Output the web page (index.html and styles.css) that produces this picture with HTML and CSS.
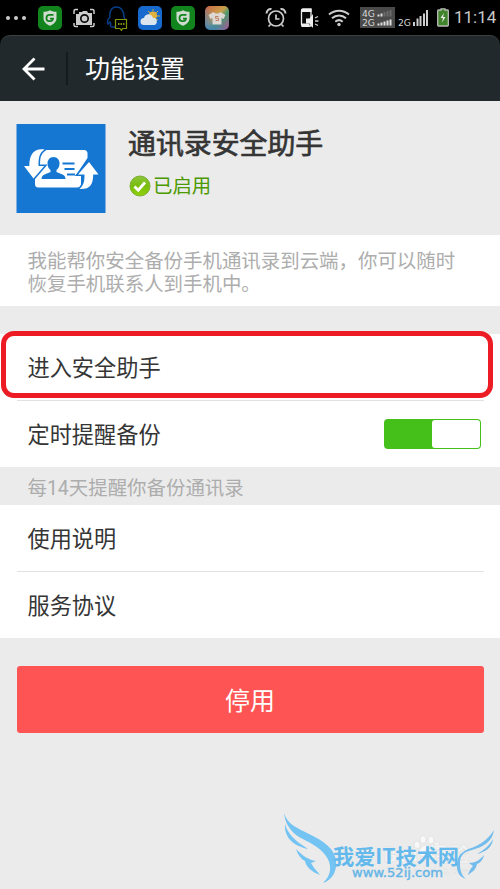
FILE: index.html
```
<!DOCTYPE html>
<html lang="zh-CN">
<head>
<meta charset="utf-8">
<title>功能设置</title>
<link rel="stylesheet" href="styles.css">
</head>
<body>
<div class="screen">
  <div class="status">
    <div class="status-left">
      <svg class="dots" width="22" height="24" viewBox="0 0 22 24"><g fill="#ccc"><circle cx="3" cy="12" r="2"/><circle cx="11" cy="12" r="2"/><circle cx="19" cy="12" r="2"/></g></svg>
      <svg class="shield" width="24" height="24" viewBox="0 0 24 24"><rect width="24" height="24" rx="5" fill="#12841e"/><path d="M12 4.200c2 1.300 4.200 1.600 6.500 1.600v6.500c0 3.500-3 6-6.500 7.500-3.500-1.500-6.500-4-6.500-7.500V5.800c2.300 0 4.500-.3 6.500-1.600z" fill="#d0dcd0"/><path d="M15.500 8.800h-4a3 3 0 0 0-3 3v.8a2.500 2.500 0 0 0 2.500 2.500h1.500a2.500 2.500 0 0 0 2.500-2.500h-3" fill="none" stroke="#12841e" stroke-width="1.800"/></svg>
      <svg class="camera" width="22" height="24" viewBox="0 0 22 24"><path d="M1 8V5q0-1.500 1.500-1.500H5M17 3.500h2.500Q21 3.500 21 5v3M1 17v2q0 1.500 1.500 1.500H5M17 20.500h2.500q1.500 0 1.500-1.500v-2" fill="none" stroke="#ccc" stroke-width="1.500"/><path d="M3 8h3V6h3l1-1h4l1 2h4v12H3z" fill="#ccc"/><circle cx="11.500" cy="12.500" r="3.700" fill="#ccc" stroke="#080808" stroke-width="1.700"/></svg>
      <svg class="qq" width="22" height="26" viewBox="0 0 22 26"><path d="M9 22H6c-2 0-2-2-1-3l-1-2-2 2c-1-2 0-5 2-7C3 6 6 2 10.500 2S18 6 18 12l1 2" fill="none" stroke="#063f8b" stroke-width="1.400"/><path d="M9.500 14.500h11v9h-4l-1 2-1.500-2H9.500z" fill="#000" stroke="#83950b" stroke-width="1.200"/><path d="M12 19h1.500m1 0H16m1 0h1.500" stroke="#a7bd12" stroke-width="1.500"/></svg>
      <svg class="weather" width="24" height="24" viewBox="0 0 24 24"><rect width="24" height="24" rx="5" fill="#1769cd"/><g stroke="#d4a82d" stroke-width="1"><path d="M15 3v2M20 5l-2 2M22 10h-3M10 5l2 2M20 14l-2-1"/></g><circle cx="15" cy="9.500" r="4" fill="#e4b33e"/><path d="M6 19a3.500 3.500 0 0 1 0-7c1-5 8-5 9 0 5-1 5 7 1 7z" fill="#dce5ed"/></svg>
      <svg class="shield2" width="24" height="24" viewBox="0 0 24 24"><rect width="24" height="24" rx="5" fill="#12841e"/><path d="M12 4.200c2 1.300 4.200 1.600 6.500 1.600v6.500c0 3.500-3 6-6.500 7.500-3.500-1.500-6.500-4-6.500-7.500V5.800c2.300 0 4.500-.3 6.500-1.600z" fill="#d0dcd0"/><path d="M15.500 8.800h-4a3 3 0 0 0-3 3v.8a2.500 2.500 0 0 0 2.500 2.500h1.500a2.500 2.500 0 0 0 2.500-2.500h-3" fill="none" stroke="#12841e" stroke-width="1.800"/></svg>
      <div class="shirt"><svg width="24" height="24" viewBox="0 0 24 24"><path d="M8.500 6c2 2 5 2 7 0l5 3-2 4-2-1v6.500h-9V12l-2 1-2-4z" fill="#ded8d4"/><path d="M13.500 10.500h-3v1.800h3v2.200h-3" fill="none" stroke="#bd8061"/></svg></div>
    </div>
    <div class="status-right">
      <svg class="alarm" width="22" height="22" viewBox="0 0 22 22"><g fill="none" stroke="#ccc" stroke-width="1.700"><circle cx="11" cy="11.500" r="7.500"/><path d="M11 7.500v4.500h3.500M5.500 17.500l-2 2M16.500 17.500l2 2"/><path d="M1.500 6.500c0-3 2.500-5 5-4.500M20.500 6.500c0-3-2.500-5-5-4.500" stroke-width="2"/></g></svg>
      <svg class="phone" width="19" height="22" viewBox="0 0 19 22"><path d="M3 2h8v17H3a1.500 1.500 0 0 1-1.500-1.500v-14Q1.500 2 3 2z" fill="#080808" stroke="#eee" stroke-width="1.300"/><path d="M1.500 2h10v3h-10zM1.500 16.500h8V20h-8z" fill="#eee"/><path d="M6 11.500h3.500L13 7v14l-3.500-4.500H6z" fill="#eee"/><path d="m15 11 3-1.500M15 14h3.500M15 17l3 1.500" stroke="#ccc" stroke-width="1.300"/></svg>
      <svg class="wifi" width="22" height="20" viewBox="0 0 22 20"><g fill="none" stroke="#ccc" stroke-width="2"><path d="M1 6.500c6-5 14-5 20 0M4 10.300c4-3.700 10-3.700 14 0M7.300 13.700c2.300-2 5.100-2 7.400 0"/></g><circle cx="11" cy="16.500" r="1.700" fill="#ccc"/></svg>
      <svg class="dual" width="35" height="21" viewBox="0 0 35 21"><rect width="35" height="21" fill="#4a4a4a"/><g class="net"><text x="2" y="9.500" textLength="13" lengthAdjust="spacingAndGlyphs">4G</text><text x="2" y="18.500" textLength="13" lengthAdjust="spacingAndGlyphs">2G</text></g><path d="M18.500 9.500v-2M21.500 9.500v-3" stroke="#ddd" stroke-width="2"/><path d="M24.500 9.500V5M27.500 9.500V4M30.500 9.500V3" stroke="#6b6b6b" stroke-width="2"/><path d="M18.500 18.500v-2M21.500 18.500v-3M24.500 18.500v-4M27.500 18.500v-5M30.500 18.500v-6" stroke="#ddd" stroke-width="2"/></svg>
      <svg class="signal" width="31" height="18" viewBox="0 0 31 18"><g class="net"><text x="0" y="16.500" textLength="13" lengthAdjust="spacingAndGlyphs">2G</text></g><path d="M16 17v-4M19.500 17V9.500M22.500 17V7M26 17V4.500M29 17V1" stroke="#ccc" stroke-width="2"/></svg>
      <svg class="battery" width="12" height="19" viewBox="0 0 12 19"><path d="M4 2V.8h4V2h2.500q.8 0 .8.800v14.400q0 .8-.8.800h-9q-.8 0-.8-.8V2.800q0-.8.800-.8z" fill="#42842b" stroke="#bbb" stroke-width="1.300"/><path d="M7 5 3.500 10H6l-1 4.500L8.500 9H6z" fill="#eee"/></svg>
      <span class="clock">11:14</span>
    </div>
  </div>

  <div class="header-wrap">
    <div class="header">
      <svg class="back" width="24" height="24" viewBox="0 0 24 24"><path d="M22.500 12H2M12.500 1.500 2 12l10.500 10.500" fill="none" stroke="#fff" stroke-width="2.800"/></svg>
      <span class="divider"></span>
      <span class="title">功能设置</span>
    </div>
  </div>

  <div class="hero">
    <svg class="logo" width="90" height="89" viewBox="0 0 90 89"><rect x=".5" width="89" height="89" fill="#1677d3"/><path d="M28 26h40q3.500 0 3.500 3.500V34L60 51h5v9q0 3.500-4 3.500H22.500q-3.500 0-3.500-3.500v-7l8-11h-4q-1-10 5-16z" fill="#fff"/><path d="M28.500 25.500C23 29 22.500 34 22.500 42h5.800L17.500 54.500 8 42h5.300c0-12 5-18 15.200-16.500z" fill="#fff" stroke="#1677d3" stroke-width="3" paint-order="stroke"/><path d="M73 38 82.500 50.500h-5.300C77 61 74 65.500 63.500 65c4.500-4 5-8 5-14.500H62z" fill="#fff" stroke="#1677d3" stroke-width="3" paint-order="stroke"/><path d="M37.500 33c4 0 6 3 6 6.500 0 3-1 5-3 6.500v2l6 2.500q3 1 3 4.500h-24q0-3.500 3-4.500l6-2.500v-2c-2-1.500-3-3.500-3-6.500 0-3.500 2-6.500 6-6.500z" fill="#1677d3"/><path d="M46.500 39.500h12M48.500 45h10M51 50.500h8" stroke="#1677d3" stroke-width="2"/></svg>
    <div class="hero-text">
      <div class="app-name">通讯录安全助手</div>
      <div class="state">
        <svg width="22" height="22" viewBox="0 0 22 22"><defs><linearGradient id="ok" x2="0" y2="1"><stop stop-color="#8cc63a"/><stop offset=".5" stop-color="#79bd0d"/><stop offset="1" stop-color="#90d20b"/></linearGradient></defs><circle cx="11" cy="11" r="10" fill="url(#ok)" stroke="#7cae31"/><path d="m5.500 11.500 3.700 3.700L16 7.500" fill="none" stroke="#fff" stroke-width="2.800"/></svg>
        <span>已启用</span>
      </div>
    </div>
  </div>

  <div class="desc">我能帮你安全备份手机通讯录到云端，你可以随时恢复手机联系人到手机中。</div>

  <div class="list first">
    <div class="row">进入安全助手<span class="highlight"></span></div>
    <div class="row">定时提醒备份<span class="toggle"><span class="knob"></span></span></div>
  </div>
  <div class="note">每14天提醒你备份通讯录</div>
  <div class="list">
    <div class="row">使用说明</div>
    <div class="row">服务协议</div>
  </div>
  <div class="button">停用</div>

  <svg class="watermark" width="230" height="89" viewBox="0 0 230 89">
    <g fill="#f8f8f8" stroke="#dedede" stroke-width=".7"><ellipse cx="147" cy="45" rx="3" ry="4"/><ellipse cx="153" cy="39.500" rx="3" ry="4"/><ellipse cx="161" cy="40" rx="3" ry="4"/><ellipse cx="167" cy="46" rx="3" ry="4"/><path d="M156 45c4 0 9 7 7 10s-11 2-14 0 3-10 7-10z"/></g>
    <g class="faint"><text x="114" y="62" font-size="20" textLength="86">Bai 经验</text><text x="116" y="74" font-size="9" textLength="84">jingyan.baidu.com</text></g>
    <g fill="#73c3f3"><path d="M14 13c3 11 13 15 25 21 15 7 26 15 27 27 1 11-4 19-13 22 9-8 9-19 3-27-7-10-18-14-27-19-9-6-14-14-15-24z"/><path d="M15 24c3 11 12 18 23 25-13-3-24-10-23-25z"/><path d="M26 49c6 6 12 11 20 12l-5 2c2 4 5 7 9 12-8-3-14-8-15-14-4-2-7-6-9-12z"/></g>
    <g fill="#73bced"><path d="M224 30c-2 13-12 17-22 20-10 2-12 7-12 14 0 7 2 12 6 15-7-2-10-8-9-16 1-10 8-13 17-16 9-4 15-9 20-17z"/><path d="M223 39c-1 9-8 13-16 15 7-4 12-8 16-15zM214 55c-1 5-4 8-7 9-1 6-5 8-9 11 1-4 3-7 5-9l-4-3c6 0 11-3 15-8z"/></g>
    <text class="brand" x="63" y="64" textLength="126" lengthAdjust="spacingAndGlyphs">我爱IT技术网</text>
    <text class="site" x="82" y="77" textLength="91" lengthAdjust="spacingAndGlyphs">www.52ij.com</text>
  </svg>
</div>
</body>
</html>
```
FILE: styles.css
```
* { box-sizing: border-box; }
body {
  margin: 0;
  background: #ebebeb;
  font-family: Roboto, "Noto Sans CJK SC", sans-serif;
  color: #353535;
}
svg { display: block; flex: none; }
.screen {
  position: relative;
  width: 500px;
  height: 889px;
  overflow: hidden;
  background: #ebebeb;
}
.status {
  display: flex;
  justify-content: space-between;
  height: 35px;
  background: #000;
}
.status-left, .status-right {
  display: flex;
  align-items: center;
}
.dots { margin-left: 5px; }
.shield { margin-left: 11px; }
.camera { margin-left: 11px; }
.qq { margin-left: 11px; }
.weather { margin-left: 10px; }
.shield2 { margin-left: 9px; }
.shirt {
  margin-left: 10px;
  width: 24px;
  height: 24px;
  border-radius: 5px;
  background: linear-gradient(to top right, #3f7fc0, transparent 55%), linear-gradient(to bottom right, #c9644a, #c9a04a 45%, #4a9a70 60%, #b0509a);
}
.status-right { padding-right: 5px; }
.phone { margin-left: 13px; }
.wifi { margin-left: 9px; }
.dual { margin-left: 10px; }
.signal { margin-left: 3px; }
.battery { margin: 0 5px 0 8px; }
.clock {
  width: 41px;
  font-size: 17px;
  line-height: 35px;
  color: #c8c8c8;
  white-space: nowrap;
}
.net {
  font: 9px "DejaVu Sans", sans-serif;
  fill: #d5d5d5;
}
.header-wrap {
  height: 66px;
  background: linear-gradient(#000 20px, #22292c 20px);
}
.header {
  display: flex;
  align-items: center;
  height: 66px;
  background: #22292c;
  border-top: 1px solid #3b4042;
  border-radius: 10px 10px 0 0;
}
.back { margin-left: 22px; }
.divider {
  width: 2px;
  height: 33px;
  margin: 0 17px 0 20px;
  background: #151b1d;
}
.title {
  padding-top: 2px;
  font-size: 25px;
  line-height: 36px;
  color: #fff;
}
.hero {
  display: flex;
  height: 134px;
  padding: 23px 0 0 16px;
}
.hero-text { padding: 1px 0 0 22px; }
.app-name {
  font-size: 27.900px;
  line-height: 40px;
  color: #353535;
  -webkit-text-stroke: .7px #353535;
}
.state {
  display: flex;
  align-items: center;
  gap: 2px;
  margin: 7px 0 0 1px;
  height: 28px;
  font-size: 19.400px;
  line-height: 28px;
  color: #4c9900;
}
.state span { padding-top: 2px; }
.desc {
  height: 71px;
  padding: 15px 30px 0 27.500px;
  font-size: 19.450px;
  line-height: 23px;
  color: #adadad;
  background: #fff;
}
.list { background: #fff; }
.first { margin-top: 28px; }
.row {
  position: relative;
  display: flex;
  align-items: center;
  justify-content: space-between;
  height: 66px;
  margin: 0 16.500px;
  padding: 2px 3px 0 11px;
  font-size: 22.200px;
  line-height: 32px;
}
.row + .row {
  height: 67px;
  border-top: 1px solid #e2e2e2;
}
.highlight {
  position: absolute;
  left: -15.500px;
  top: -3px;
  width: 492px;
  height: 67px;
  border: 5px solid #ed1c24;
  border-radius: 13px;
}
.toggle {
  display: flex;
  justify-content: flex-end;
  width: 97px;
  height: 30px;
  margin-top: -2px;
  padding: 1px;
  border-radius: 4px;
  background: #45c01a;
}
.knob {
  width: 48px;
  border-radius: 3px;
  background: #fff;
}
.note {
  height: 38px;
  padding-left: 27.500px;
  font-size: 19.450px;
  line-height: 43px;
  color: #adadad;
}
.button {
  height: 67px;
  margin: 28px 16.500px 0;
  border-radius: 3px;
  background: #ff5454;
  color: #fff;
  font-size: 25px;
  line-height: 71px;
  text-align: center;
}
.watermark {
  position: absolute;
  left: 270px;
  top: 800px;
}
.faint { fill: #f5f5f5; stroke: #dfdfdf; stroke-width: .4; font-weight: bold; }
.brand { font: bold 21px "Noto Sans CJK SC", sans-serif; fill: #64b9ec; }
.site { font: 12px "DejaVu Sans", sans-serif; fill: #66b5e6; stroke: #66b5e6; stroke-width: .4; }
```
